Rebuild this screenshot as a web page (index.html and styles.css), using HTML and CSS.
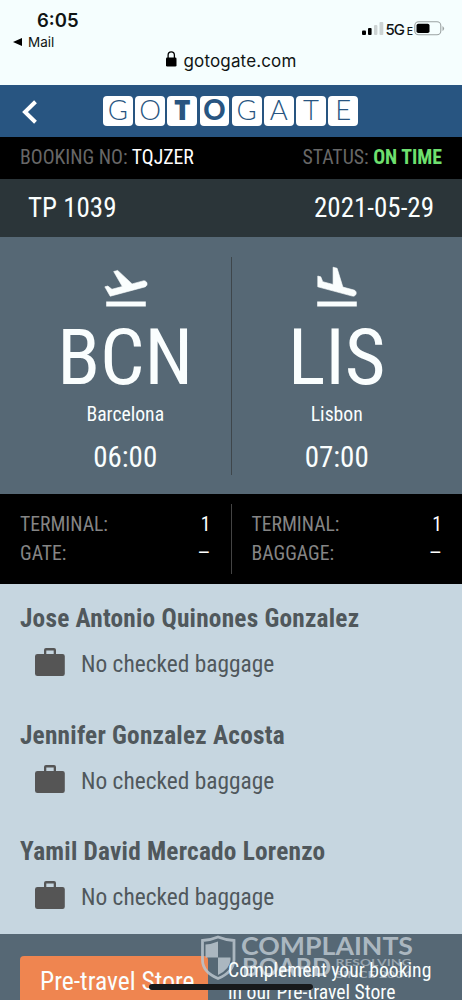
FILE: index.html
```html
<!DOCTYPE html>
<html lang="en">
<head>
<meta charset="utf-8">
<title>Gotogate</title>
<link rel="stylesheet" href="styles.css">
</head>
<body>
<div class="phone">
  <header class="status">
    <div class="status-left">
      <div class="clock">6:05</div>
      <div class="back-app"><svg width="9" height="8" viewBox="0 0 9 8"><path d="M0 4L9 0V8Z" fill="#000"/></svg><span>Mail</span></div>
    </div>
    <div class="status-right">
      <svg class="signal" width="22" height="13" viewBox="0 0 22 13"><rect x="0" y="8.5" width="4" height="4.5" rx="1"/><rect x="6" y="6" width="3.6" height="7" rx="1"/><rect x="12" y="3" width="3.4" height="10" rx="1" fill="#ccd3d3"/><rect x="17.5" y="0" width="3.8" height="13" rx="1" fill="#ccd3d3"/></svg>
      <span class="net">5G<small>E</small></span>
      <svg class="battery" width="31" height="15" viewBox="0 0 31 15"><rect x=".8" y=".8" width="26" height="13" rx="3.8" fill="none" stroke="#9ba2a2" stroke-width="1.1"/><rect x="2.5" y="2.7" width="13" height="9.3" rx="1.8"/><path d="M28.5 5v5q1.6-1 1.6-2.5T28.500 5z" fill="#9ba2a2"/></svg>
    </div>
    <div class="url"><svg width="11" height="16" viewBox="0 0 11 16"><rect x="0" y="6.500" width="10.500" height="9" rx="1.300"/><path d="M2.100 7V4.200a3.150 3.400 0 0 1 6.300 0V7" fill="none" stroke="#000" stroke-width="1.300"/></svg><span>gotogate.com</span></div>
  </header>

  <nav class="brand">
    <svg class="chevron" width="16" height="24" viewBox="0 0 16 24"><path d="M13.500 1.800L3 12L13.500 22.200" fill="none" stroke="#fff" stroke-width="4"/></svg>
    <div class="logo"><b>G</b><b>O</b><b class="heavy wide">T</b><b class="heavy">O</b><b>G</b><b>A</b><b>T</b><b>E</b></div>
  </nav>

  <div class="booking"><span>BOOKING NO: <em>TQJZER</em></span><span>STATUS: <strong>ON TIME</strong></span></div>
  <div class="flight"><span>TP 1039</span><span>2021-05-29</span></div>

  <section class="route">
    <div class="stop">
      <svg class="plane" width="50" height="50" viewBox="0 0 24 24"><path d="M2.500 19h19v2.400h-19z"/><path class="body" transform="translate(0 .5)" d="M22.070 9.640c-.21-.8-1.040-1.280-1.840-1.060L14.920 10l-6.900-6.430-1.930.51 4.140 7.170-4.970 1.330-1.970-1.540-1.450.39 2.590 4.490L21 11.490c.81-.23 1.280-1.050 1.070-1.850z"/></svg>
      <div class="code">BCN</div><div class="city">Barcelona</div><div class="time">06:00</div>
    </div>
    <div class="stop">
      <svg class="plane" width="50" height="50" viewBox="0 0 24 24"><path d="M2.500 19h19v2.400h-19z"/><path class="body" transform="translate(0 .5)" d="M19.340 15.850c.8.210 1.620-.26 1.840-1.060.21-.8-.26-1.620-1.060-1.840l-5.310-1.420-2.760-9.020L10.120 2v8.280L5.150 8.950l-.93-2.320-1.450-.39v5.170l16.570 4.440z"/></svg>
      <div class="code">LIS</div><div class="city">Lisbon</div><div class="time">07:00</div>
    </div>
  </section>

  <section class="gates">
    <dl><div><dt>TERMINAL:</dt><dd>1</dd></div><div><dt>GATE:</dt><dd class="dash">–</dd></div></dl>
    <dl><div><dt>TERMINAL:</dt><dd>1</dd></div><div><dt>BAGGAGE:</dt><dd class="dash">–</dd></div></dl>
  </section>

  <main class="people">
    <article><h2>Jose Antonio Quinones Gonzalez</h2><p><svg width="30" height="28" viewBox="0 0 30 28"><path fill-rule="evenodd" d="M9 6V2q0-2 2-2h8q2 0 2 2v4h6.500q2.300 0 2.300 2.300v17.400Q29.800 28 27.500 28h-25Q0 28 0 25.700v-17.400Q0 6 2.500 6zM11.300 6h7.400V2.400h-7.400z"/></svg><span>No checked baggage</span></p></article>
    <article><h2>Jennifer Gonzalez Acosta</h2><p><svg width="30" height="28" viewBox="0 0 30 28"><path fill-rule="evenodd" d="M9 6V2q0-2 2-2h8q2 0 2 2v4h6.500q2.300 0 2.300 2.300v17.400Q29.800 28 27.500 28h-25Q0 28 0 25.700v-17.400Q0 6 2.500 6zM11.300 6h7.400V2.400h-7.400z"/></svg><span>No checked baggage</span></p></article>
    <article><h2>Yamil David Mercado Lorenzo</h2><p><svg width="30" height="28" viewBox="0 0 30 28"><path fill-rule="evenodd" d="M9 6V2q0-2 2-2h8q2 0 2 2v4h6.500q2.300 0 2.300 2.300v17.400Q29.800 28 27.500 28h-25Q0 28 0 25.700v-17.400Q0 6 2.500 6zM11.300 6h7.400V2.400h-7.400z"/></svg><span>No checked baggage</span></p></article>
  </main>

  <footer class="store">
    <div class="cta">Pre-travel Store</div>
    <svg class="watermark" width="214" height="48" viewBox="0 0 214 48">
      <path d="M2.500 5.500Q11 5 18 2Q25.500 5 34 5.500V25Q33.500 37 18 43.500Q2.500 37 2.500 25Z" fill="none" stroke="#bac5ce" stroke-width="2.800"/>
      <path d="M18 6.500V22.500H5.500V9.500Q12 9 18 6.500zM18 22.500H30.500V25Q30 34 18 40z" fill="#bac5ce"/>
      <text x="41" y="19.500" class="wm-big" textLength="172" lengthAdjust="spacingAndGlyphs">COMPLAINTS</text>
      <text x="42" y="41" class="wm-big" textLength="89" lengthAdjust="spacingAndGlyphs">BOARD</text>
      <text x="135.500" y="31" class="wm-small" textLength="76" lengthAdjust="spacingAndGlyphs">RESOLVING</text>
      <text x="135.500" y="43" class="wm-small" textLength="76" lengthAdjust="spacingAndGlyphs">SINCE 2004</text>
    </svg>
    <div class="pitch">Complement your booking<br>in our Pre-travel Store</div>
    <div class="home-bar"></div>
  </footer>
</div>
</body>
</html>
```
FILE: styles.css
```css
* { box-sizing: border-box; margin: 0; padding: 0; }
body { width: 462px; height: 1000px; overflow: hidden; font-family: "Roboto Condensed", Roboto, sans-serif; font-stretch: 75%; }
svg { display: block; flex: none; }
.phone { height: 1000px; overflow: hidden; display: flex; flex-direction: column; }
.phone > * { flex: none; }
.status { height: 85px; background: #f5fefe; color: #101414; font-family: Inter, sans-serif; font-stretch: 100%; display: grid; grid-template-columns: 1fr 1fr; grid-template-rows: 50px 35px; }
.status-left { padding: 9px 0 0 13px; }
.clock { font-size: 18.500px; line-height: 22px; font-weight: 600; padding-left: 24px; }
.back-app { display: flex; align-items: center; gap: 6px; font-size: 13.500px; line-height: 22px; font-weight: 400; }
.status-right { display: flex; padding: 21px 17px 0 0; justify-content: flex-end; align-items: flex-start; }
.signal { margin: 1px 1.500px 0 0; }
.net { font-size: 15px; line-height: 17px; font-weight: 500; white-space: nowrap; margin-right: 2px; letter-spacing: -1.100px; }
.net small { font-size: 10.500px; margin-left: 3px; }
.url { grid-column: 1 / 3; display: flex; justify-content: center; gap: 7px; font-size: 17px; line-height: 22px; letter-spacing: .15px; }
.url svg { margin-top: 1px; }
.brand { height: 52px; background: #285581; display: flex; align-items: flex-start; padding: 11px 0 0 22px; }
.chevron { margin-top: 4px; }
.logo { display: flex; gap: 2.400px; margin-left: 65px; }
.logo b { width: 29.800px; height: 29.800px; border-radius: 4px; background: #fff; color: #285581; font: 300 27.500px/28px Lato, sans-serif; text-align: center; }
.logo .heavy { font-weight: 900; }
.logo .wide { font: 800 28px/26px "Open Sans", sans-serif; }
.booking { height: 42px; background: #000; color: #676767; display: flex; justify-content: space-between; padding: 0 20px; font-size: 19.800px; line-height: 41px; }
.booking em { color: #fff; font-style: normal; }
.booking strong { color: #6fe06f; }
.flight { height: 58px; background: #2b3539; color: #fafefe; display: flex; justify-content: space-between; padding: 0 28px; font-size: 27px; line-height: 59px; }
.route { height: 257px; background: #566875; color: #fafefe; fill: #fafefe; display: flex; padding: 20px 20px; }
.stop { flex: 1; display: flex; flex-direction: column; align-items: center; height: 218px; padding-top: 5px; }
.stop + .stop { border-left: 1px solid #3e464b; }
.plane { margin-left: 1px; }
.plane .body { stroke: #fafefe; stroke-width: .3; }
.code { font-size: 78.500px; line-height: 90px; }
.city { font-size: 19.700px; line-height: 24px; margin-top: 1px; }
.time { font-size: 29px; line-height: 34px; margin-top: 13px; }
.gates { height: 90px; background: #000; display: flex; padding: 10px 0; font-size: 19.700px; line-height: 28.500px; color: #858585; }
.gates dl { flex: 1; padding: 7px 20px; }
.gates dl + dl { border-left: 1px solid #444; }
.gates dl div { display: flex; justify-content: space-between; }
.gates dd { color: #fff; }
.gates .dash { font-stretch: 100%; font-family: Roboto, sans-serif; }
.people { height: 350px; background: #c6d6e0; color: #50585c; fill: #555; padding: 20px; }
.people article { height: 116.500px; }
.people h2 { font-size: 25.300px; line-height: 30px; font-weight: 700; letter-spacing: .22px; }
.people p { display: flex; gap: 16px; padding: 14px 0 0 15px; font-size: 23.400px; line-height: 33px; }
.store { position: relative; height: 70px; background: #566875; display: flex; padding: 22px 0 0 20px; color: #fafefe; }
.cta { height: 60px; width: 188px; background: #ef8550; border-radius: 4px; font-size: 25.600px; line-height: 51px; padding-left: 20px; }
.pitch { position: relative; margin: 4px 0 0 20px; font-size: 19.700px; line-height: 22px; white-space: nowrap; }
.watermark { position: absolute; left: 200px; top: 1px; opacity: .85; }
.wm-big { font: 700 24px Lato, sans-serif; fill: #bac5ce; }
.wm-small { font: 700 10px Lato, sans-serif; fill: #a4b0ba; }
.home-bar { position: absolute; left: 149px; top: 50px; width: 164px; height: 6px; border-radius: 3px; background: #17191b; }
```
